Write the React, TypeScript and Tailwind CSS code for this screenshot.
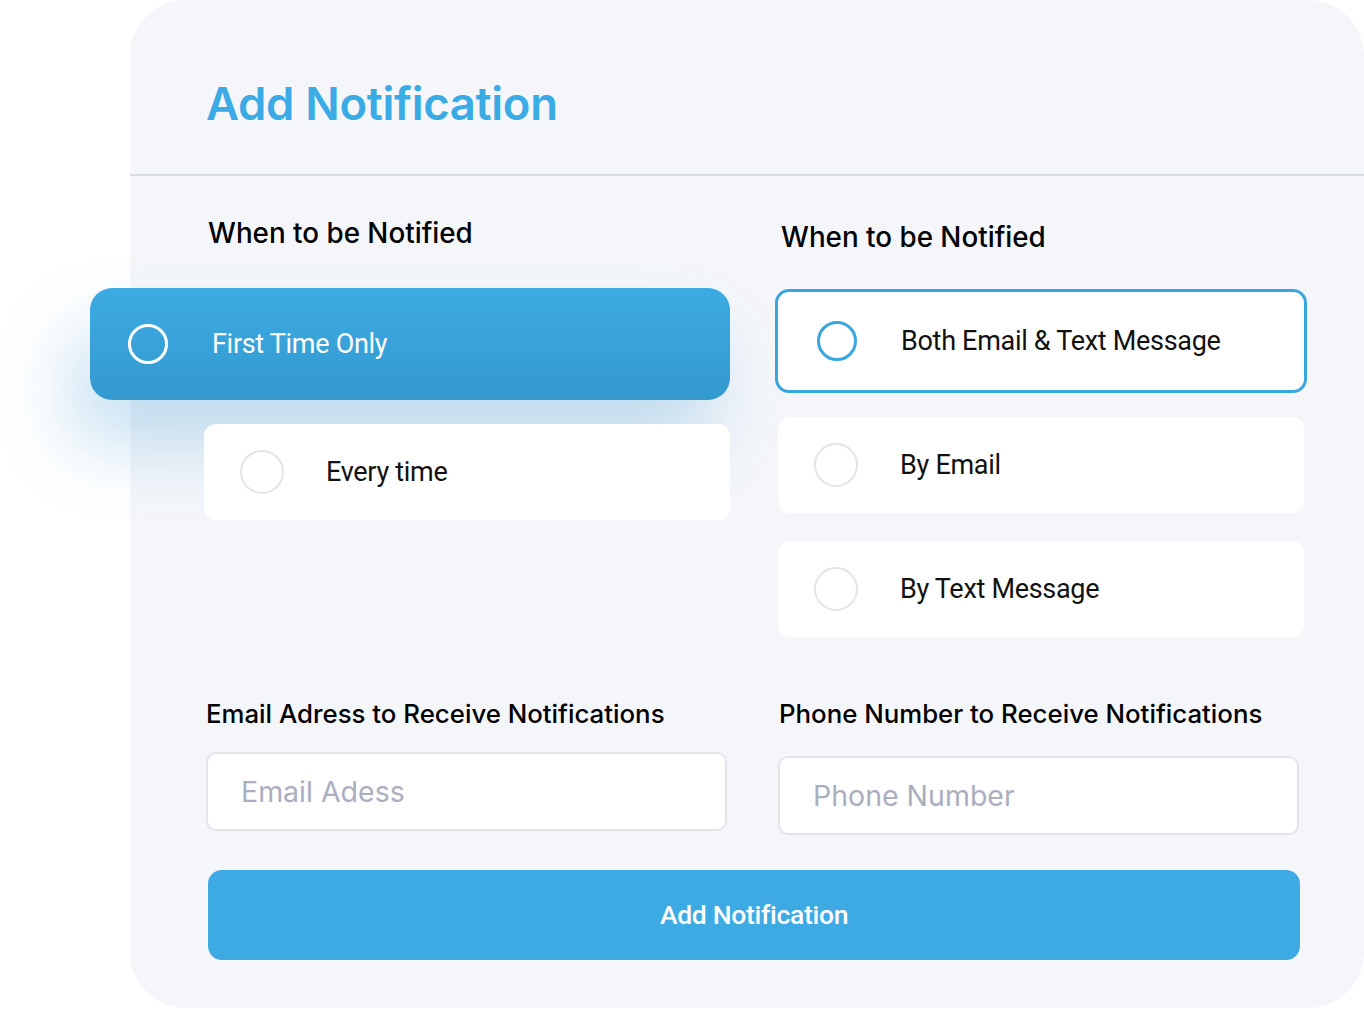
import React, { useState } from "react";

const options1 = ["First Time Only", "Every time"];
const options2 = ["Both Email & Text Message", "By Email", "By Text Message"];

const Radio = ({ on, light }: { on: boolean; light?: boolean }) => {
  if (on && light) return <span className="block w-[40px] h-[40px] rounded-full border-[3px] border-white shrink-0" />;
  if (on) return <span className="block w-[40px] h-[40px] rounded-full border-[3.5px] border-[#3aa6df] shrink-0" />;
  return <span className="block w-[44px] h-[44px] rounded-full border-2 border-[#e2e4eb] shrink-0" />;
};

const App = () => {
  const [when, setWhen] = useState(0);
  const [how, setHow] = useState(0);

  return (
    <div className="min-h-[1010px] w-[1364px] bg-white font-['Inter',sans-serif]">
      <div className="ml-[130px] w-[1234px] h-[1008px] rounded-[56px] bg-[#f4f6fa]">
        {/* Header */}
        <div className="h-[176px] border-b-2 border-[#d6dde4] pl-[76px] pt-[74px]">
          <h1 className="text-[45.4px] leading-[60px] font-semibold text-[#3aabe5] tracking-[-0.3px]">Add Notification</h1>
        </div>

        <div className="grid grid-cols-[526px_526px] gap-x-[48px] pl-[74px] pt-[39px]">
          {/* left column */}
          <div>
            <h2 className="ml-[4px] text-[27.8px] leading-[36px] font-medium text-black">When to be Notified</h2>
            <div className="mt-[37px] flex flex-col gap-[24px] font-['Roboto',sans-serif]">
              {options1.map((o, i) => (
                <button
                  key={o}
                  onClick={() => setWhen(i)}
                  className={
                    when === i
                      ? "ml-[-114px] h-[112px] rounded-[22px] bg-gradient-to-b from-[#3dabe3] to-[#3399cf] flex items-center pl-[38px] text-white shadow-[-20px_45px_70px_rgba(60,150,210,0.28)]"
                      : "h-[96px] rounded-[12px] bg-white flex items-center pl-[36px] text-[#111]"
                  }
                >
                  <Radio on={when === i} light />
                  <span className={when === i ? "ml-[44px] text-[27px] tracking-[-0.3px]" : "ml-[42px] text-[27px] tracking-[-0.3px]"}>{o}</span>
                </button>
              ))}
            </div>
          </div>

          {/* right column */}
          <div>
            <h2 className="ml-[3px] mt-[4px] text-[27.8px] leading-[36px] font-medium text-black">When to be Notified</h2>
            <div className="mt-[34px] flex flex-col font-['Roboto',sans-serif]">
              {options2.map((o, i) => (
                <button
                  key={o}
                  onClick={() => setHow(i)}
                  className={
                    (i === 1 ? "mt-[24px] " : i === 2 ? "mt-[28px] " : "") +
                    (how === i
                      ? "ml-[-3px] w-[532px] h-[104px] rounded-[14px] bg-white border-[3px] border-[#3aa6df] flex items-center pl-[39px] text-[#111]"
                      : "h-[96px] rounded-[12px] bg-white flex items-center pl-[36px] text-[#111]")
                  }
                >
                  <Radio on={how === i} />
                  <span className={how === i ? "ml-[44px] text-[27px] tracking-[-0.3px]" : "ml-[42px] text-[27px] tracking-[-0.3px]"}>{o}</span>
                </button>
              ))}
            </div>
          </div>

          {/* inputs */}
          <div className="mt-[59px]">
            <label className="block ml-[2px] text-[25.8px] leading-[36px] font-medium text-black">Email Adress to Receive Notifications</label>
            <input
              placeholder="Email Adess"
              className="mt-[20px] ml-[2px] w-[521px] h-[79px] rounded-[10px] border-2 border-[#e3e5ec] bg-white pl-[33px] text-[28.5px] text-[#333] placeholder:text-[#abadc1] outline-none"
            />
          </div>
          <div className="mt-[59px]">
            <label className="block ml-[1px] text-[25.8px] leading-[36px] font-medium text-black">Phone Number to Receive Notifications</label>
            <input
              placeholder="Phone Number"
              className="mt-[24px] w-[521px] h-[79px] rounded-[10px] border-2 border-[#e3e5ec] bg-white pl-[33px] text-[28.5px] text-[#333] placeholder:text-[#abadc1] outline-none"
            />
          </div>
        </div>

        <div className="pl-[78px] pt-[35px]">
          <button className="w-[1092px] h-[90px] rounded-[14px] bg-[#3daae4] text-white text-[26.5px] font-medium font-['Roboto',sans-serif] tracking-[-0.3px]">
            Add Notification
          </button>
        </div>
      </div>
    </div>
  );
};

export default App;
